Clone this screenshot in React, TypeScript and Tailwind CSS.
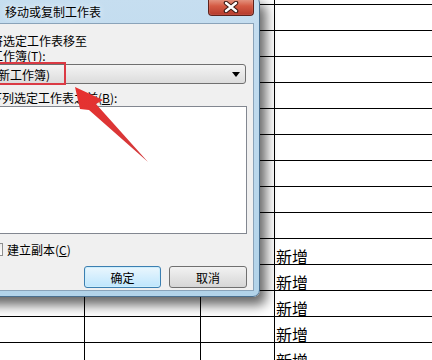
import React from "react";

const rows = Array.from({ length: 14 }, (_, i) => i);

// sheet behind the dialog
function Sheet() {
  return (
    <div className="flex flex-col">
      <div className="grid h-[5px] grid-cols-[85px_116px_74px_1fr]">
        <div className="border-r border-b border-black" />
        <div className="border-r border-b border-black" />
        <div className="border-r border-b border-black" />
        <div className="border-b border-black" />
      </div>
      {rows.map((i) => (
        <div key={i} className="grid h-[26px] grid-cols-[85px_116px_74px_1fr]">
          <div className="border-r border-b border-black" />
          <div className="border-r border-b border-black" />
          <div className="border-r border-b border-black" />
          <div className="flex items-end border-b border-black pl-px text-[16px] leading-[16px] text-black">
            {i >= 9 ? "新增" : ""}
          </div>
        </div>
      ))}
    </div>
  );
}

function CloseButton() {
  return (
    <div className="mr-[5px] flex h-[19px] w-[46px] items-center justify-center rounded-b-[4px] border border-t-0 border-[#5e221b] bg-gradient-to-b from-[#e8aa99] via-[#d45a44] to-[#b53a2c] shadow-[inset_0_0_1px_rgba(255,255,255,0.8)]">
      <svg width="16" height="12" viewBox="0 0 16 12" className="mt-[2px]">
        <path d="M3 2 L13 10 M13 2 L3 10" stroke="#3b1a15" strokeWidth="4.5" strokeLinecap="round" />
        <path d="M3 2 L13 10 M13 2 L3 10" stroke="#ffffff" strokeWidth="2.4" strokeLinecap="round" />
      </svg>
    </div>
  );
}

function Dialog() {
  return (
    <div className="absolute left-[-28px] top-[-4px] flex h-[301px] w-[288px] flex-col rounded-[7px] border border-[#4a6f8f] bg-gradient-to-b from-[#c6def0] to-[#b2d3e9] shadow-[6px_8px_12px_rgba(0,0,0,0.6)]">
      {/* title bar */}
      <div className="flex h-[26px] shrink-0 items-start justify-between">
        <div className="pl-[32px] pt-[7px] text-[12px] leading-[15px] text-black [text-shadow:0_0_6px_#ffffff]">
          移动或复制工作表
        </div>
        <CloseButton />
      </div>

      {/* client area */}
      <div className="ml-[7px] mr-[5px] flex h-[268px] flex-col border border-[#8aa3b9] bg-[#f0f0f0] text-[12px] leading-[15px] text-black">
        <div className="mt-[9px] pl-[10px]">将选定工作表移至</div>
        <div className="pl-[10px]">
          工作簿(<span className="underline">T</span>):
        </div>
        <div className="ml-[9px] mt-px flex h-[20px] w-[256px] items-center justify-between rounded-[3px] border border-[#707070] bg-gradient-to-b from-[#f4f4f4] to-[#dcdcdc] pl-[3px] pr-[5px]">
          <span>(新工作簿)</span>
          <svg width="8" height="5" viewBox="0 0 8 5">
            <path d="M0 0 H8 L4 5 Z" fill="#000" />
          </svg>
        </div>
        <div className="mt-[6px] pl-[9px]">
          下列选定工作表之前(<span className="underline">B</span>):
        </div>
        <div className="ml-[9px] mt-px h-[128px] w-[257px] border border-[#828790] bg-white" />
        <div className="ml-[9px] mt-[8px] flex items-center gap-[4px]">
          <div className="h-[13px] w-[13px] border border-[#8e8f8f] bg-gradient-to-br from-[#dcdcdc] to-[#ffffff]" />
          <span>
            建立副本(<span className="underline">C</span>)
          </span>
        </div>
        <div className="mr-[6px] mt-[9px] flex justify-end gap-[8px]">
          <div className="flex h-[22px] w-[77px] items-center justify-center rounded-[3px] border border-[#3c7fb1] bg-gradient-to-b from-[#eaf6fd] to-[#bee6fd] shadow-[inset_0_0_0_1px_#cdeefc]">
            确定
          </div>
          <div className="flex h-[22px] w-[78px] items-center justify-center rounded-[3px] border border-[#707070] bg-gradient-to-b from-[#f2f2f2] to-[#d6d6d6]">
            取消
          </div>
        </div>
      </div>
    </div>
  );
}

export default function App() {
  return (
    <div className="relative h-[360px] w-[432px] overflow-hidden bg-white font-['Noto_Sans_CJK_SC','Noto_Sans',sans-serif]">
      <Sheet />
      <Dialog />
      {/* red annotation box */}
      <div className="absolute left-[-4px] top-[62px] h-[23px] w-[70px] border-2 border-[#db3a44]" />
      {/* red arrow */}
      <svg className="pointer-events-none absolute left-0 top-0" width="432" height="360" viewBox="0 0 432 360">
        <defs>
          <linearGradient id="arr" x1="0" y1="0" x2="1" y2="1">
            <stop offset="0" stopColor="#e8302e" />
            <stop offset="1" stopColor="#d23a3c" />
          </linearGradient>
        </defs>
        <path d="M75 87 L103 100 L96 104 L148 162 L89 110 L80 109 Z" fill="url(#arr)" />
      </svg>
    </div>
  );
}
